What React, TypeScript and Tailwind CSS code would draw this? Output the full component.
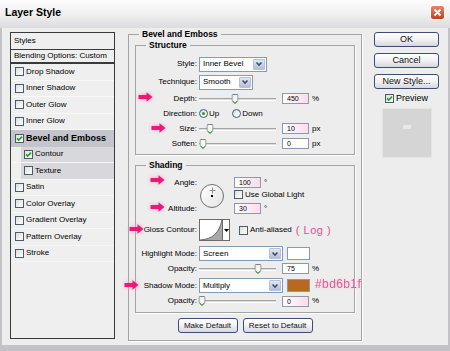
import type { ReactNode } from "react";

const STYLES = [
  { label: "Drop Shadow" },
  { label: "Inner Shadow" },
  { label: "Outer Glow" },
  { label: "Inner Glow" },
  { label: "Bevel and Emboss", checked: true, active: true },
  { label: "Contour", checked: true, sub: true },
  { label: "Texture", sub: true },
  { label: "Satin" },
  { label: "Color Overlay" },
  { label: "Gradient Overlay" },
  { label: "Pattern Overlay" },
  { label: "Stroke" },
];

function Box({ checked, className = "" }: { checked?: boolean; className?: string }) {
  return (
    <span
      className={`flex h-[9px] w-[9px] shrink-0 items-center justify-center border border-[#4b5b70] bg-gradient-to-br from-[#dedeD8] to-white ${className}`}
    >
      {checked && (
        <svg width="7" height="7" viewBox="0 0 7 7">
          <path d="M1 3.4l1.7 1.7L6 1.6" fill="none" stroke="#21a121" strokeWidth="1.6" />
        </svg>
      )}
    </span>
  );
}

function Radio({ on }: { on?: boolean }) {
  return (
    <span className="flex h-[9px] w-[9px] shrink-0 items-center justify-center rounded-full border border-[#3d5a7c] bg-gradient-to-br from-[#dcdcd6] to-white">
      {on && <span className="h-[3px] w-[3px] rounded-full bg-[#21a121]" />}
    </span>
  );
}

function Btn({ children, className = "" }: { children: ReactNode; className?: string }) {
  return (
    <div
      className={`flex h-[15px] items-center justify-center rounded-[3px] border border-[#3d4d73] bg-gradient-to-b from-white via-[#f2f2f4] to-[#d6d7de] text-[#111] ${className}`}
    >
      {children}
    </div>
  );
}

function Num({ value, pink }: { value: string; pink?: boolean }) {
  return (
    <div
      className={`ml-[6px] flex h-[11px] w-[27px] shrink-0 items-center border border-[#8c98ac] pl-[4px] text-[7px] ${
        pink ? "bg-gradient-to-r from-white to-[#fcdce8]" : "bg-white"
      }`}
    >
      {value}
    </div>
  );
}

function Unit({ children }: { children: ReactNode }) {
  return <span className="ml-[3px]">{children}</span>;
}

function Slider({ pos }: { pos: number }) {
  return (
    <div className="relative h-full w-[77px] shrink-0">
      <div className="absolute left-0 right-0 top-[calc(50%-1px)] h-[3px] border-y border-t-[#a4a4a4] border-b-white bg-[#dcdcdc]" />
      <svg
        className="absolute top-[calc(50%-5px)] -translate-x-1/2"
        style={{ left: `${pos * 100}%` }}
        width="7"
        height="10"
        viewBox="0 0 7 10"
      >
        <path
          d="M0.5 1.5Q0.5 0.5 1.5 0.5H5.5Q6.5 0.5 6.5 1.5V6.5L3.5 9.5L0.5 6.5Z"
          fill="#f6f6f2"
          stroke="#7b8089"
        />
        <path d="M1.2 7.2L3.5 9.3L5.8 7.2" fill="none" stroke="#21a121" />
      </svg>
    </div>
  );
}

function Select({ value, className }: { value: string; className: string }) {
  return (
    <div className={`flex h-[15px] shrink-0 border border-[#7f9db9] bg-white ${className}`}>
      <span className="flex flex-1 items-center pl-[3px]">{value}</span>
      <span className="m-px flex w-[12px] items-center justify-center rounded-[1px] border border-[#b7c0d8] bg-gradient-to-b from-[#e2e6f2] to-[#b6bed6]">
        <svg width="8" height="6" viewBox="0 0 8 6">
          <path d="M1.5 1.5L4 4L6.5 1.5" fill="none" stroke="#3c4d72" strokeWidth="1.6" />
        </svg>
      </span>
    </div>
  );
}

function Row({ label, className = "", children }: { label: string; className?: string; children: ReactNode }) {
  return (
    <div className={`flex items-center ${className}`}>
      <span className="w-[61px] shrink-0 text-right">{label}</span>
      <div className="ml-[2px] flex h-full items-center">{children}</div>
    </div>
  );
}

function Arrow({ className }: { className: string }) {
  return (
    <svg
      className={`absolute drop-shadow-[0_0_2px_#f7a1c6] ${className}`}
      width="15"
      height="10"
      viewBox="0 0 15 10"
    >
      <path d="M0.5 3H8.5V0.3L14.5 5L8.5 9.7V7H0.5Z" fill="#ec1878" />
    </svg>
  );
}

function StylesList() {
  return (
    <div className="ml-[8px] mt-[4px] h-[307px] w-[105px] shrink-0 border border-[#3a3a3a] bg-[#efefef]">
      <div className="flex h-[17px] items-center border-b border-[#3a3a3a] pl-[3px]">Styles</div>
      <div className="flex h-[14px] items-center border-b-2 border-[#3a3a3a] pl-[3px]">
        Blending Options: Custom
      </div>
      {STYLES.map((s) => (
        <div
          key={s.label}
          className={`flex h-[16.5px] items-center ${
            s.active ? "bg-[#c3c4cc] text-[9px] font-bold" : "border-b border-[#f8f8f8]"
          }`}
        >
          {s.sub ? (
            <div className="ml-[10px] flex h-full flex-1 items-center gap-[2px] bg-[#d7d7dc] pl-[3px]">
              <Box checked={s.checked} />
              <span>{s.label}</span>
            </div>
          ) : (
            <div className="ml-[4px] flex items-center gap-[2px]">
              <Box checked={s.checked} />
              <span>{s.label}</span>
            </div>
          )}
        </div>
      ))}
    </div>
  );
}

function Structure() {
  return (
    <fieldset className="mt-px border border-[#a4a4a4] pb-[3px] pt-[6px] shadow-[1px_1px_0_#fff]">
      <legend className="ml-[10px] px-[3px] text-[8.5px] font-bold leading-[10px]">Structure</legend>
      <Row label="Style:" className="h-[16px]">
        <Select value="Inner Bevel" className="w-[68px]" />
      </Row>
      <Row label="Technique:" className="mt-[2px] h-[16px]">
        <Select value="Smooth" className="w-[54px]" />
      </Row>
      <Row label="Depth:" className="mt-px h-[15px]">
        <Slider pos={0.47} />
        <Num value="450" pink />
        <Unit>%</Unit>
      </Row>
      <Row label="Direction:" className="h-[15px]">
        <Radio on />
        <span className="ml-px">Up</span>
        <span className="ml-[13px]" />
        <Radio />
        <span className="ml-px">Down</span>
      </Row>
      <Row label="Size:" className="h-[15px]">
        <Slider pos={0.14} />
        <Num value="10" pink />
        <Unit>px</Unit>
      </Row>
      <Row label="Soften:" className="h-[15px]">
        <Slider pos={0.05} />
        <Num value="0" />
        <Unit>px</Unit>
      </Row>
    </fieldset>
  );
}

function Shading() {
  return (
    <fieldset className="mt-[5px] border border-[#a4a4a4] pb-[4px] pt-[7px] shadow-[1px_1px_0_#fff]">
      <legend className="ml-[10px] px-[3px] text-[8.5px] font-bold leading-[10px]">Shading</legend>
      <div className="flex h-[37px]">
        <div className="flex w-[61px] shrink-0 flex-col justify-between text-right">
          <span className="flex h-[11px] items-center justify-end">Angle:</span>
          <span className="flex h-[11px] items-center justify-end">Altitude:</span>
        </div>
        <div className="relative ml-[3px] mt-[7px] h-[24px] w-[24px] rounded-full border border-[#6e6e6e] bg-gradient-to-br from-white to-[#e4e4e4]">
          <svg className="absolute left-[8px] top-[2px]" width="7" height="7" viewBox="0 0 7 7">
            <path d="M3.5 0.5V6.5M0.5 3.5H6.5" stroke="#8c8c9c" strokeWidth="1" />
          </svg>
          <span className="absolute left-[10px] top-[10px] h-[2px] w-[2px] bg-black" />
        </div>
        <div className="ml-[4px] flex flex-col">
          <div className="flex h-[11px] items-center">
            <Num value="100" pink />
            <Unit>°</Unit>
          </div>
          <div className="ml-[6px] mt-px flex h-[11px] items-center gap-[2px]">
            <Box className="!bg-[#f3d7e6]" />
            <span>Use Global Light</span>
          </div>
          <div className="mt-[3px] flex h-[11px] items-center">
            <Num value="30" pink />
            <Unit>°</Unit>
          </div>
        </div>
      </div>
      <Row label="Gloss Contour:" className="mt-[5px] h-[22px]">
        <div className="flex h-[22px] border border-[#6a6a6a] bg-white">
          <svg width="22" height="20" viewBox="0 0 22 20">
            <path d="M0 20C13 19 19 13 22 0V20Z" fill="#a9a9a9" />
            <path d="M0 20C13 19 19 13 22 0" fill="none" stroke="#505050" strokeWidth="0.8" />
          </svg>
          <span className="flex w-[7px] items-center justify-center border-l border-[#6a6a6a]">
            <svg width="5" height="3" viewBox="0 0 5 3">
              <path d="M0 0H5L2.5 3Z" fill="#000" />
            </svg>
          </span>
        </div>
        <Box className="ml-[9px] !bg-[#e4eef8]" />
        <span className="ml-[2px]">Anti-aliased</span>
        <span className="ml-[4px] whitespace-nowrap text-[11px] tracking-[0.5px] text-[#e2508e]">( Log )</span>
      </Row>
      <Row label="Highlight Mode:" className="mt-[5px] h-[15px]">
        <Select value="Screen" className="w-[84px]" />
        <span className="ml-[4px] h-[13px] w-[23px] border border-[#8c98ac] bg-white" />
      </Row>
      <Row label="Opacity:" className="h-[15px]">
        <Slider pos={0.77} />
        <Num value="75" />
        <Unit>%</Unit>
      </Row>
      <Row label="Shadow Mode:" className="mt-[2px] h-[15px]">
        <Select value="Multiply" className="w-[84px]" />
        <span className="ml-[4px] h-[13px] w-[23px] border border-[#8c98ac] bg-[#b8691f]" />
      </Row>
      <Row label="Opacity:" className="mt-px h-[14px]">
        <Slider pos={0.04} />
        <Num value="0" pink />
        <Unit>%</Unit>
      </Row>
    </fieldset>
  );
}

export default function App() {
  return (
    <div className="relative flex h-[351px] w-[450px] flex-col overflow-hidden bg-[#c2c2c7] font-['Liberation_Sans',Arial,sans-serif] text-[8px] leading-none text-black">
      <div className="flex h-[28px] shrink-0 items-start justify-between bg-gradient-to-b from-[#fdfdfd] via-[#f0f0f0] to-[#dcdcdf] px-[5px]">
        <span className="mt-[7px] text-[10.5px] font-bold">Layer Style</span>
        <span className="mt-[5px] flex h-[15px] w-[15px] items-center justify-center rounded-[3px] border border-white bg-gradient-to-b from-[#e8846a] to-[#c43c22]">
          <svg width="9" height="9" viewBox="0 0 9 9">
            <path d="M1.5 1.5L7.5 7.5M7.5 1.5L1.5 7.5" stroke="#fff" strokeWidth="1.8" />
          </svg>
        </span>
      </div>
      <div className="mx-[2px] mb-[6px] flex flex-1 items-start bg-[#ededed]">
        <StylesList />
        <fieldset className="ml-[13px] mt-px w-[234px] shrink-0 border border-[#a4a4a4] px-[6px] pb-[7px] shadow-[1px_1px_0_#fff]">
          <legend className="ml-[4px] px-[3px] text-[8.5px] font-bold leading-[10px]">Bevel and Emboss</legend>
          <Structure />
          <Shading />
          <div className="mt-[5px] flex justify-center gap-[5px]">
            <Btn className="w-[60px]">Make Default</Btn>
            <Btn className="w-[70px]">Reset to Default</Btn>
          </div>
        </fieldset>
        <div className="ml-[12px] mt-[4px] flex w-[65px] shrink-0 flex-col items-center text-[9px]">
          <Btn className="w-[65px]">OK</Btn>
          <Btn className="mt-[6px] w-[65px]">Cancel</Btn>
          <Btn className="mt-[6px] w-[65px]">New Style...</Btn>
          <div className="mt-[5px] flex h-[9px] items-center gap-[2px]">
            <Box checked />
            <span>Preview</span>
          </div>
          <div className="mt-[5px] flex h-[50px] w-[50px] items-start justify-center border border-[#e4e4e4] bg-[#d5d5d5] pt-[16px]">
            <span className="h-[4px] w-[8px] bg-[#e8e8e8]" />
          </div>
        </div>
      </div>
      <Arrow className="left-[138px] top-[92px]" />
      <Arrow className="left-[151px] top-[123px]" />
      <Arrow className="left-[150px] top-[175px]" />
      <Arrow className="left-[150px] top-[202px]" />
      <Arrow className="left-[129px] top-[224px]" />
      <Arrow className="left-[124px] top-[280px]" />
      <span className="absolute left-[315px] top-[278px] whitespace-nowrap text-[12px] tracking-[0.4px] text-[#e45a96] drop-shadow-[0_0_1px_#f9c4da]">
        #bd6b1f
      </span>
    </div>
  );
}
